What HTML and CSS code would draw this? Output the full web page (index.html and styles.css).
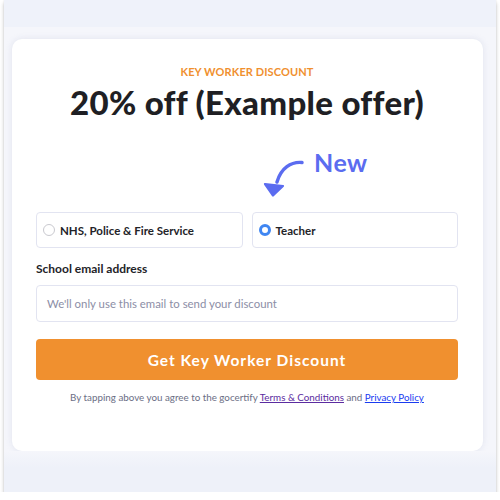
FILE: index.html
```html
<!DOCTYPE html>
<html lang="en">
<head>
<meta charset="utf-8">
<title>Key Worker Discount</title>
<link rel="stylesheet" href="styles.css">
</head>
<body>
<div class="frame">
  <div class="topband"></div>
  <div class="card">
    <p class="eyebrow">KEY WORKER DISCOUNT</p>
    <h1 class="title">20% off (Example offer)</h1>
    <div class="newrow">
      <svg class="arrow" width="42" height="38" viewBox="0 0 42 38">
        <path d="M40 2.5 C29 1.5 19 8 15 22" fill="none" stroke="#5b6cf0" stroke-width="3.4" stroke-linecap="round"/>
        <path d="M3 24 L21 26 L11 35.5 Z" fill="#5b6cf0" stroke="#5b6cf0" stroke-width="2.2" stroke-linejoin="round"/>
      </svg>
      <span class="newtext">New</span>
    </div>
    <div class="options">
      <label class="option"><span class="radio"></span>NHS, Police &amp; Fire Service</label>
      <label class="option"><span class="radio checked"></span>Teacher</label>
    </div>
    <div class="field-label">School email address</div>
    <div class="input">We'll only use this email to send your discount</div>
    <div class="button">Get Key Worker Discount</div>
    <p class="terms">By tapping above you agree to the gocertify <a class="tc" href="#">Terms &amp; Conditions</a> and <a class="pp" href="#">Privacy Policy</a></p>
  </div>
  <div class="bottomband"></div>
</div>
</body>
</html>
```
FILE: styles.css
```css
html, body {
  margin: 0;
  padding: 0;
  background: #ffffff;
}
body {
  font-family: "Lato", "Noto Sans", sans-serif;
  color: #1f1f24;
}
.frame {
  margin-left: 4px;
  width: 492px;
  height: 492px;
  background: #f5f6fb;
  box-shadow: 0 3px 4px rgba(0, 0, 0, 0.22), 0 0 1px rgba(0, 0, 0, 0.15);
  display: flex;
  flex-direction: column;
  align-items: flex-start;
}
.topband {
  width: 100%;
  height: 27px;
  background: #eff2fa;
  flex: none;
}
.bottomband {
  width: 100%;
  flex: 1;
  background: linear-gradient(#f5f6fb, #eef1f9 40%);
}
.card {
  margin-top: 12px;
  margin-left: 8px;
  width: 471px;
  height: 412px;
  box-sizing: border-box;
  background: #ffffff;
  border-radius: 10px;
  box-shadow: 0 0 6px rgba(200, 205, 225, 0.45);
  padding: 0 25px 0 24px;
  display: flex;
  flex-direction: column;
  flex: none;
}
.eyebrow {
  margin: 27px 0 0;
  text-align: center;
  color: #f0902f;
  font-size: 11px;
  font-weight: 700;
  line-height: 12px;
  letter-spacing: 0.1px;
}
.title {
  margin: 5px 0 0;
  text-align: center;
  font-size: 33px;
  font-weight: 900;
  line-height: 38px;
  letter-spacing: 0.3px;
  color: #1f1f24;
}
.newrow {
  display: flex;
  align-items: flex-start;
  margin: 28px 0 0 226px;
  height: 63px;
}
.arrow {
  margin-top: 11px;
  flex: none;
}
.newtext {
  margin-left: 10px;
  color: #5b6cf0;
  font-size: 25px;
  font-weight: 700;
  line-height: 26px;
  letter-spacing: 0.5px;
}
.options {
  display: grid;
  grid-template-columns: 1fr 1fr;
  gap: 9px;
}
.option {
  height: 36px;
  box-sizing: border-box;
  border: 1px solid #e2e4f1;
  border-radius: 4px;
  display: flex;
  align-items: center;
  padding-left: 6px;
  font-size: 11.5px;
  font-weight: 700;
  color: #232328;
}
.radio {
  width: 12px;
  height: 12px;
  box-sizing: border-box;
  border: 1px solid #c9c9cf;
  border-radius: 50%;
  margin-right: 5px;
  flex: none;
}
.radio.checked {
  border: 3.8px solid #3f86f2;
  background: #ffffff;
}
.field-label {
  margin-top: 13px;
  font-size: 12px;
  font-weight: 700;
  line-height: 16px;
  color: #232328;
}
.input {
  margin-top: 8px;
  height: 37px;
  box-sizing: border-box;
  border: 1px solid #e2e4f1;
  border-radius: 4px;
  padding-left: 10px;
  display: flex;
  align-items: center;
  font-size: 11.4px;
  color: #8c8ea6;
}
.button {
  margin-top: 17px;
  height: 41px;
  border-radius: 4px;
  background: #f0902f;
  color: #ffffff;
  font-size: 15.5px;
  font-weight: 700;
  letter-spacing: 1px;
  display: flex;
  align-items: center;
  justify-content: center;
}
.terms {
  margin: 10px 0 0;
  text-align: center;
  font-size: 9.8px;
  line-height: 14px;
  color: #6b6e85;
}
.terms a {
  text-decoration: underline;
}
.tc {
  color: #5b2ca0;
}
.pp {
  color: #1a3cf0;
}
```
